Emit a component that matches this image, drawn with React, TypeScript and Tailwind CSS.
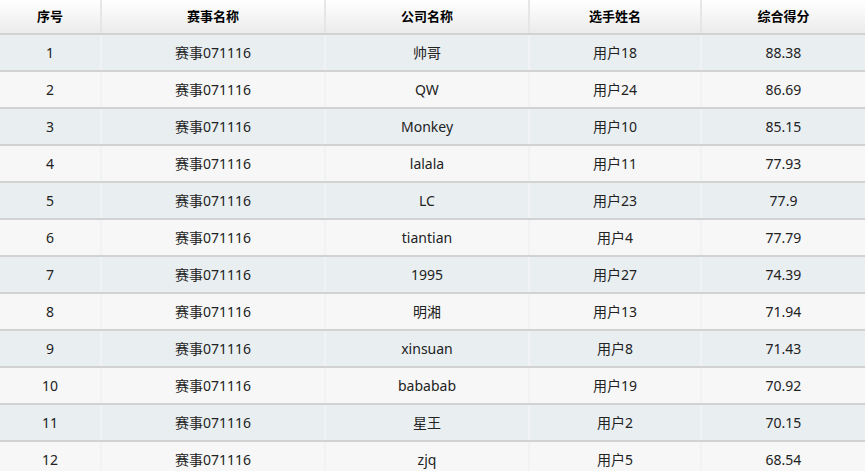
import React from 'react';

const rows: [number, string, string, string, string][] = [
  [1, '赛事071116', '帅哥', '用户18', '88.38'],
  [2, '赛事071116', 'QW', '用户24', '86.69'],
  [3, '赛事071116', 'Monkey', '用户10', '85.15'],
  [4, '赛事071116', 'lalala', '用户11', '77.93'],
  [5, '赛事071116', 'LC', '用户23', '77.9'],
  [6, '赛事071116', 'tiantian', '用户4', '77.79'],
  [7, '赛事071116', '1995', '用户27', '74.39'],
  [8, '赛事071116', '明湘', '用户13', '71.94'],
  [9, '赛事071116', 'xinsuan', '用户8', '71.43'],
  [10, '赛事071116', 'bababab', '用户19', '70.92'],
  [11, '赛事071116', '星王', '用户2', '70.15'],
  [12, '赛事071116', 'zjq', '用户5', '68.54'],
];

const headers = ['序号', '赛事名称', '公司名称', '选手姓名', '综合得分'];

const cols = 'grid grid-cols-[100px_224px_204px_172px_1fr]';

const App: React.FC = () => {
  return (
    <div
      className="w-[865px] h-[471px] overflow-hidden bg-[#f7f7f7] text-[14px]"
      style={{ fontFamily: '"Noto Sans", "Noto Sans CJK SC", sans-serif' }}
    >
      {/* Header */}
      <div className={`${cols} h-[33px] bg-gradient-to-b from-white to-[#ebebeb]`}>
        {headers.map((h, i) => (
          <div
            key={h}
            className={`flex items-center justify-center font-bold text-[13px] text-black ${i > 0 ? 'border-l-2 border-[#e6e6e6]' : ''}`}
          >
            {h}
          </div>
        ))}
      </div>

      {/* Body */}
      {rows.map((r, idx) => (
        <div
          key={r[0]}
          className={`${cols} h-[37px] border-t-2 border-[#d2d2d2] text-[#222] ${idx % 2 === 0 ? 'bg-[#e9eef1]' : 'bg-[#f7f7f7]'}`}
        >
          {r.map((c, i) => (
            <div
              key={i}
              className={`flex items-center justify-center ${i > 0 ? 'border-l-2 border-[#f0f2f3]' : ''}`}
            >
              {c}
            </div>
          ))}
        </div>
      ))}
    </div>
  );
};

export default App;
